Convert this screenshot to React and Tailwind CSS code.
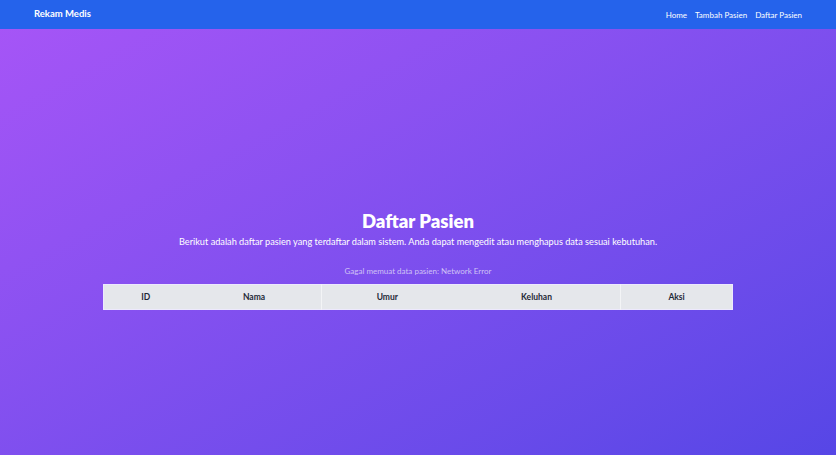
export default function App() {
  const cols = [
    { label: 'ID', w: 'w-[84px]', cls: '' },
    { label: 'Nama', w: 'w-[134px]', cls: '' },
    { label: 'Umur', w: 'w-[132px]', cls: 'border-l border-[#f3f4f6]' },
    { label: 'Keluhan', w: 'w-[168px]', cls: '' },
    { label: 'Aksi', w: 'w-[112px]', cls: 'border-l border-[#f3f4f6]' },
  ];

  return (
    <div className="min-h-screen flex flex-col bg-linear-to-br from-[#a855f7] to-[#5646e6] font-['Lato',sans-serif]">
      <nav className="h-[29px] bg-[#2563eb] flex items-center justify-between px-[34px]">
        <span className="text-white font-bold text-[9.5px]">Rekam Medis</span>
        <div className="flex gap-[8px] text-white text-[8px]">
          <a href="#">Home</a>
          <a href="#">Tambah Pasien</a>
          <a href="#">Daftar Pasien</a>
        </div>
      </nav>

      <main className="flex flex-col items-center pt-[181px]">
        <h1 className="text-white font-extrabold text-[18.5px] leading-[23px]">Daftar Pasien</h1>
        <p className="text-white text-[9.2px] leading-[14px] mt-[2px]">
          Berikut adalah daftar pasien yang terdaftar dalam sistem. Anda dapat mengedit atau menghapus data sesuai kebutuhan.
        </p>
        <p className="text-[#cfc2f5] text-[8px] leading-[12px] mt-[16px]">
          Gagal memuat data pasien: Network Error
        </p>
        <table className="mt-[7px] w-[630px] border border-[#ede9fe] border-collapse">
          <thead>
            <tr className="bg-[#e5e7eb] h-[25px]">
              {cols.map((c) => (
                <th key={c.label} className={`${c.w} ${c.cls} text-[8.5px] font-bold text-[#1f2937] text-center`}>
                  {c.label}
                </th>
              ))}
            </tr>
          </thead>
        </table>
      </main>
    </div>
  );
}
